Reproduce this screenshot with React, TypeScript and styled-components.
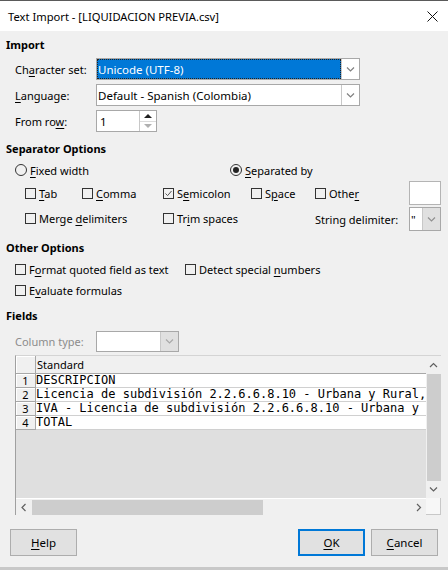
import styled, { createGlobalStyle } from 'styled-components';

const GlobalStyle = createGlobalStyle`
  html, body { margin: 0; padding: 0; background: #f0f0f0; }
  body {
    font-family: 'Noto Sans', 'Liberation Sans', sans-serif;
    font-size: 11px;
    color: #000;
  }
`;

const Dialog = styled.div`
  width: 448px;
  height: 570px;
  box-sizing: border-box;
  display: flex;
  flex-direction: column;
  background: #f0f0f0;
  border-top: 1px solid #5a5a5a;
  border-bottom: 3px solid #c8c8c8;
`;

const TitleBar = styled.div`
  height: 30px;
  flex: none;
  background: #fff;
  display: flex;
  align-items: center;
  justify-content: space-between;
  padding: 0 10px 0 8px;
  font-size: 11.2px;
`;

const Body = styled.div`
  flex: 1;
  display: flex;
  flex-direction: column;
  padding: 0 6px;
`;

const SectionTitle = styled.div<{ mt: number }>`
  margin-top: ${p => p.mt}px;
  height: 14px;
  line-height: 14px;
  font-weight: bold;
`;

const FormGrid = styled.div`
  margin-top: 6px;
  padding-left: 9px;
  display: grid;
  grid-template-columns: 81px auto;
  grid-auto-rows: 22px;
  row-gap: 4px;
  align-items: center;
`;

const Label = styled.span<{ disabled?: boolean }>`
  color: ${p => (p.disabled ? '#8c8c8c' : '#000')};
  white-space: nowrap;
`;

const Key = styled.u`
  text-underline-offset: 2px;
`;

const Select = styled.div<{ width: number; height?: number }>`
  width: ${p => p.width}px;
  height: ${p => p.height ?? 22}px;
  box-sizing: border-box;
  border: 1px solid #a8a8a8;
  background: #fff;
  display: flex;
`;

const SelectValue = styled.div<{ focused?: boolean }>`
  flex: 1;
  display: flex;
  align-items: center;
  padding-left: 1px;
  font-size: 11.5px;
  white-space: nowrap;
  overflow: hidden;
  ${p =>
    p.focused &&
    `
    background: #0078d7;
    color: #fff;
    outline: 1px dotted #222;
    outline-offset: -1px;
  `}
`;

const DropButton = styled.div<{ disabled?: boolean }>`
  width: 17px;
  flex: none;
  border-left: 1px solid #c8c8c8;
  background: ${p => (p.disabled ? '#e0e0e0' : '#fff')};
  display: flex;
  align-items: center;
  justify-content: center;
`;

const SpinBox = styled.div`
  width: 61px;
  height: 22px;
  box-sizing: border-box;
  border: 1px solid #a8a8a8;
  background: #fff;
  display: flex;
`;

const SpinValue = styled.div`
  flex: 1;
  padding-left: 3px;
  font-size: 11.5px;
  display: flex;
  align-items: center;
`;

const SpinButtons = styled.div`
  width: 16px;
  border-left: 1px solid #c8c8c8;
  display: flex;
  flex-direction: column;
`;

const SpinHalf = styled.div<{ top?: boolean }>`
  flex: 1;
  display: flex;
  align-items: center;
  justify-content: center;
  border-bottom: ${p => (p.top ? '1px solid #dcdcdc' : 'none')};
`;

const Arrow = styled.div<{ up?: boolean; dim?: boolean }>`
  width: 0;
  height: 0;
  border-left: 4px solid transparent;
  border-right: 4px solid transparent;
  ${p =>
    p.up
      ? `border-bottom: 4px solid ${p.dim ? '#b0b0b0' : '#202020'};`
      : `border-top: 4px solid ${p.dim ? '#b0b0b0' : '#202020'};`}
`;

const RadioRow = styled.div`
  margin-top: 4px;
  height: 20px;
  padding-left: 9px;
  display: grid;
  grid-template-columns: 215px auto;
  align-items: center;
`;

const SepGrid = styled.div`
  padding-left: 19px;
  display: grid;
  grid-template-columns: 57px 81px 88px 64px 94px 32px;
  grid-template-rows: 24px 24px;
  row-gap: 2px;
  margin-top: 1px;
  align-items: center;
`;

const Span = styled.div<{ cols: number }>`
  grid-column: span ${p => p.cols};
`;

const TextBox = styled.div<{ height: number }>`
  width: 32px;
  height: ${p => p.height}px;
  box-sizing: border-box;
  border: 1px solid #b4b4b4;
  background: #fff;
`;

const OptGrid = styled.div`
  margin-top: 4px;
  padding-left: 9px;
  display: grid;
  grid-template-columns: 170px auto;
  grid-auto-rows: 21px;
  align-items: center;
`;

const Check = styled.label`
  display: inline-flex;
  align-items: center;
  gap: 3px;
  white-space: nowrap;
`;

const Box = styled.span`
  width: 11px;
  height: 11px;
  box-sizing: border-box;
  border: 1px solid #333;
  display: inline-flex;
  align-items: center;
  justify-content: center;
`;

const Circle = styled.span<{ on?: boolean }>`
  width: 12px;
  height: 12px;
  box-sizing: border-box;
  border-radius: 50%;
  border: 1px solid #333;
  display: inline-flex;
  align-items: center;
  justify-content: center;
  &::after {
    content: '';
    width: 6px;
    height: 6px;
    border-radius: 50%;
    background: ${p => (p.on ? '#222' : 'transparent')};
  }
`;

const ColTypeRow = styled.div`
  margin-top: 8px;
  padding-left: 9px;
  height: 21px;
  display: grid;
  grid-template-columns: 81px auto;
  align-items: center;
`;

const GridFrame = styled.div`
  margin: 3px 0 0 9px;
  width: 426px;
  height: 160px;
  box-sizing: border-box;
  border-left: 1px solid #a0a0a0;
  border-top: 1px solid #d4d4d4;
  display: grid;
  grid-template-columns: 1fr 15px;
  grid-template-rows: 1fr 17px;
`;

const Sheet = styled.div`
  background: #dfdfdf;
  overflow: hidden;
  display: flex;
  flex-direction: column;
`;

const SheetRow = styled.div<{ head?: boolean }>`
  display: flex;
  height: ${p => (p.head ? 18 : 14)}px;
  flex: none;
`;

const RowHead = styled.div`
  width: 20px;
  flex: none;
  box-sizing: border-box;
  background: #f0f0f0;
  border-right: 1px solid #a8a8a8;
  border-bottom: 1px solid #a8a8a8;
  box-shadow: inset 1px 1px 0 #fff;
  font-size: 11px;
  line-height: 14px;
  text-align: center;
  overflow: hidden;
`;

const HeadCell = styled.div`
  flex: 1;
  box-sizing: border-box;
  background: #f0f0f0;
  border-bottom: 1px solid #a8a8a8;
  padding-left: 1px;
  line-height: 18px;
`;

const DataCell = styled.div`
  flex: 1;
  box-sizing: border-box;
  background: #fff;
  border-bottom: 1px solid #d0d0d0;
  font-family: 'DejaVu Sans Mono', 'Liberation Mono', monospace;
  font-size: 12px;
  line-height: 13px;
  white-space: pre;
  overflow: hidden;
`;

const VScroll = styled.div`
  background: #f0f0f0;
  display: flex;
  flex-direction: column;
  align-items: stretch;
`;

const ScrollArrow = styled.div<{ size: number; across?: boolean }>`
  flex: none;
  ${p => (p.across ? `width: ${p.size}px;` : `height: ${p.size}px;`)}
  display: flex;
  align-items: center;
  justify-content: center;
`;

const VThumb = styled.div`
  flex: 1;
  margin: 0 0 0 1px;
  background: #cdcdcd;
`;

const HScroll = styled.div`
  background: #f0f0f0;
  border-top: 1px solid #fff;
  display: flex;
  align-items: center;
`;

const HThumb = styled.div`
  width: 231px;
  height: 15px;
  background: #cdcdcd;
`;

const HSpacer = styled.div`
  flex: 1;
`;

const Corner = styled.div`
  background: #f7f7f7;
  border-right: 1px solid #c8c8c8;
  border-bottom: 1px solid #c8c8c8;
`;

const ButtonBar = styled.div`
  margin-top: 14px;
  padding: 0 4px;
  display: flex;
  justify-content: space-between;
`;

const ButtonGroup = styled.div`
  display: flex;
  gap: 6px;
`;

const Button = styled.button<{ primary?: boolean }>`
  width: 67px;
  height: 27px;
  box-sizing: border-box;
  background: #e1e1e1;
  border: 1px solid ${p => (p.primary ? '#0078d7' : '#adadad')};
  box-shadow: ${p => (p.primary ? 'inset 0 0 0 1px #0078d7' : 'none')};
  font-family: inherit;
  font-size: 11.5px;
  color: #000;
  padding: 0;
`;

const Chevron = ({ dir, color = '#606060' }: { dir: 'up' | 'down' | 'left' | 'right'; color?: string }) => {
  const paths = {
    down: 'M1 1.5 L4.5 5 L8 1.5',
    up: 'M1 5 L4.5 1.5 L8 5',
    left: 'M5.5 1 L2 4.5 L5.5 8',
    right: 'M3 1 L6.5 4.5 L3 8',
  };
  const horiz = dir === 'left' || dir === 'right';
  return (
    <svg width={9} height={horiz ? 9 : 7} viewBox={horiz ? '0 0 9 9' : '0 0 9 7'}>
      <path d={paths[dir]} fill="none" stroke={color} strokeWidth="1.2" />
    </svg>
  );
};

const CheckItem = ({ checked, children }: { checked?: boolean; children: React.ReactNode }) => (
  <Check>
    <Box>
      {checked && (
        <svg width="9" height="9" viewBox="0 0 9 9">
          <path d="M1.5 4.5 L3.6 6.6 L7.5 2" fill="none" stroke="#555" strokeWidth="1" />
        </svg>
      )}
    </Box>
    <span>{children}</span>
  </Check>
);

const rows = [
  'DESCRIPCION',
  'Licencia de subdivisión 2.2.6.6.8.10 - Urbana y Rural, Loteo',
  'IVA - Licencia de subdivisión 2.2.6.6.8.10 - Urbana y Rural',
  'TOTAL',
];

export default function App() {
  return (
    <Dialog>
      <GlobalStyle />
      <TitleBar>
        <span>Text Import - [LIQUIDACION PREVIA.csv]</span>
        <svg width="11" height="11" viewBox="0 0 11 11">
          <path d="M0.5 0.5 L10.5 10.5 M10.5 0.5 L0.5 10.5" stroke="#111" strokeWidth="1" />
        </svg>
      </TitleBar>
      <Body>
        <SectionTitle mt={7}>Import</SectionTitle>
        <FormGrid>
          <Label>Ch<Key>a</Key>racter set:</Label>
          <Select width={264}>
            <SelectValue focused>Unicode (UTF-8)</SelectValue>
            <DropButton><Chevron dir="down" color="#808080" /></DropButton>
          </Select>
          <Label><Key>L</Key>anguage:</Label>
          <Select width={264}>
            <SelectValue>Default - Spanish (Colombia)</SelectValue>
            <DropButton><Chevron dir="down" color="#808080" /></DropButton>
          </Select>
          <Label>From ro<Key>w</Key>:</Label>
          <SpinBox>
            <SpinValue>1</SpinValue>
            <SpinButtons>
              <SpinHalf top><Arrow up /></SpinHalf>
              <SpinHalf><Arrow dim /></SpinHalf>
            </SpinButtons>
          </SpinBox>
        </FormGrid>

        <SectionTitle mt={10}>Separator Options</SectionTitle>
        <RadioRow>
          <Check><Circle /><span><Key>F</Key>ixed width</span></Check>
          <Check><Circle on /><span><Key>S</Key>eparated by</span></Check>
        </RadioRow>
        <SepGrid>
          <CheckItem><Key>T</Key>ab</CheckItem>
          <CheckItem><Key>C</Key>omma</CheckItem>
          <CheckItem checked>S<Key>e</Key>micolon</CheckItem>
          <CheckItem>S<Key>p</Key>ace</CheckItem>
          <CheckItem>Othe<Key>r</Key></CheckItem>
          <TextBox height={24} />
          <Span cols={2}><CheckItem>Merge <Key>d</Key>elimiters</CheckItem></Span>
          <Span cols={2}><CheckItem>Tr<Key>i</Key>m spaces</CheckItem></Span>
          <Label>Strin<Key>g</Key> delimiter:</Label>
          <Select width={32} height={24}>
            <SelectValue>"</SelectValue>
            <DropButton disabled><Chevron dir="down" color="#909090" /></DropButton>
          </Select>
        </SepGrid>

        <SectionTitle mt={10}>Other Options</SectionTitle>
        <OptGrid>
          <CheckItem>F<Key>o</Key>rmat quoted field as text</CheckItem>
          <CheckItem>Detect special <Key>n</Key>umbers</CheckItem>
          <CheckItem>E<Key>v</Key>aluate formulas</CheckItem>
        </OptGrid>

        <SectionTitle mt={8}>Fields</SectionTitle>
        <ColTypeRow>
          <Label disabled>Column type:</Label>
          <Select width={83} height={21}>
            <SelectValue />
            <DropButton disabled><Chevron dir="down" color="#a8a8a8" /></DropButton>
          </Select>
        </ColTypeRow>

        <GridFrame>
          <Sheet>
            <SheetRow head>
              <RowHead />
              <HeadCell>Standard</HeadCell>
            </SheetRow>
            {rows.map((r, i) => (
              <SheetRow key={i}>
                <RowHead>{i + 1}</RowHead>
                <DataCell>{r}</DataCell>
              </SheetRow>
            ))}
          </Sheet>
          <VScroll>
            <ScrollArrow size={18}><Chevron dir="up" /></ScrollArrow>
            <VThumb />
            <ScrollArrow size={17}><Chevron dir="down" /></ScrollArrow>
          </VScroll>
          <HScroll>
            <ScrollArrow size={16} across><Chevron dir="left" /></ScrollArrow>
            <HThumb />
            <HSpacer />
            <ScrollArrow size={16} across><Chevron dir="right" /></ScrollArrow>
          </HScroll>
          <Corner />
        </GridFrame>

        <ButtonBar>
          <Button><Key>H</Key>elp</Button>
          <ButtonGroup>
            <Button primary><Key>O</Key>K</Button>
            <Button><Key>C</Key>ancel</Button>
          </ButtonGroup>
        </ButtonBar>
      </Body>
    </Dialog>
  );
}
